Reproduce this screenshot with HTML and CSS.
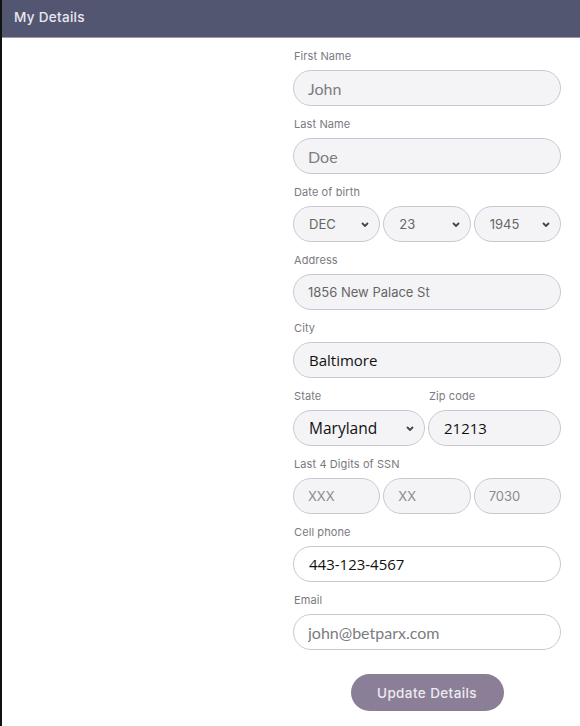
FILE: index.html
```html
<!DOCTYPE html>
<html>
<head>
<meta charset="utf-8">
<link rel="stylesheet" href="styles.css">
</head>
<body>
<div class="page">
  <header class="topbar"><span class="title">My Details</span></header>
  <main class="content">
    <form class="form">
      <label class="lbl">First Name</label>
      <input class="field lato grey" value="John">
      <label class="lbl">Last Name</label>
      <input class="field lato grey" value="Doe">
      <label class="lbl">Date of birth</label>
      <div class="row three">
        <div class="field sel mont"><span>DEC</span><svg class="chev" viewBox="0 0 8 5"><path d="M1 1l3 3 3-3" /></svg></div>
        <div class="field sel mont"><span>23</span><svg class="chev" viewBox="0 0 8 5"><path d="M1 1l3 3 3-3" /></svg></div>
        <div class="field sel mont"><span>1945</span><svg class="chev" viewBox="0 0 8 5"><path d="M1 1l3 3 3-3" /></svg></div>
      </div>
      <label class="lbl">Address</label>
      <input class="field mont" value="1856 New Palace St">
      <label class="lbl">City</label>
      <input class="field sys" value="Baltimore">
      <div class="row two">
        <div class="col">
          <label class="lbl">State</label>
          <div class="field sel sys big"><span>Maryland</span><svg class="chev" viewBox="0 0 8 5"><path d="M1 1l3 3 3-3" /></svg></div>
        </div>
        <div class="col">
          <label class="lbl">Zip code</label>
          <input class="field sys" value="21213">
        </div>
      </div>
      <label class="lbl">Last 4 Digits of SSN</label>
      <div class="row three">
        <input class="field mont light" value="XXX">
        <input class="field mont light" value="XX">
        <input class="field mont light" value="7030">
      </div>
      <label class="lbl">Cell phone</label>
      <input class="field sys white" value="443-123-4567">
      <label class="lbl">Email</label>
      <input class="field lato grey white" value="john@betparx.com">
      <div class="actions">
        <button type="button" class="btn">Update Details</button>
      </div>
    </form>
  </main>
</div>
</body>
</html>
```
FILE: styles.css
```css
* { box-sizing: border-box; }
html, body { margin: 0; padding: 0; background: #fff; }
body { font-family: Inter, "Noto Sans", sans-serif; }
.page {
  border-left: 2px solid #111;
  min-height: 726px;
}
.topbar {
  height: 38px;
  background: #535670;
  border-bottom: 1px solid #9c9bad;
  display: flex;
  align-items: center;
  padding-left: 12px;
}
.title {
  color: #e9e8f2;
  font-size: 13.5px;
  font-weight: 500;
  letter-spacing: 0.3px;
  margin-top: -3px;
}
.content {
  padding: 11px 0 0 291px;
}
.form {
  width: 268px;
  display: flex;
  flex-direction: column;
}
.lbl {
  display: block;
  font-size: 11px;
  line-height: 14px;
  letter-spacing: 0.1px;
  color: #7a7a80;
  margin: 0 0 7px 1px;
}
.field {
  display: block;
  width: 100%;
  height: 36px;
  border: 1.5px solid #c9c8d2;
  border-radius: 18px;
  background: #f4f4f6;
  padding: 0 14px;
  margin: 0 0 11px 0;
  outline: none;
  font-size: 14px;
  color: #555;
}
.field.white { background: #fff; }
.lato { font-family: Lato, sans-serif; font-size: 16px; }
.grey { color: #7c7c82; }
.mont { font-family: Inter, sans-serif; font-size: 13px; color: #666; }
.mont.light { color: #8a8a90; }
.sys { font-family: "Open Sans", "Noto Sans", sans-serif; font-size: 15px; color: #111; padding-left: 15px; }
.big { font-size: 15.5px; padding-left: 16px; }
.sel {
  display: flex;
  align-items: center;
  justify-content: space-between;
  padding: 0 10px 0 15px;
}
.chev {
  width: 8px;
  height: 5px;
  fill: none;
  stroke: #444;
  stroke-width: 1.8;
}
.row { display: grid; gap: 3px; }
.row.three { grid-template-columns: 1fr 1fr 1fr; }
.row.two { grid-template-columns: 132px 1fr; }
.row .field { min-width: 0; }
.col { display: flex; flex-direction: column; min-width: 0; }
.actions {
  display: flex;
  justify-content: center;
  padding-top: 13px;
}
.btn {
  width: 153px;
  height: 37px;
  border: none;
  border-radius: 19px;
  background: #8a7f96;
  color: #eeeaf2;
  font-family: Inter, sans-serif;
  font-size: 13.5px;
  font-weight: 500;
  letter-spacing: 0.4px;
}
```
